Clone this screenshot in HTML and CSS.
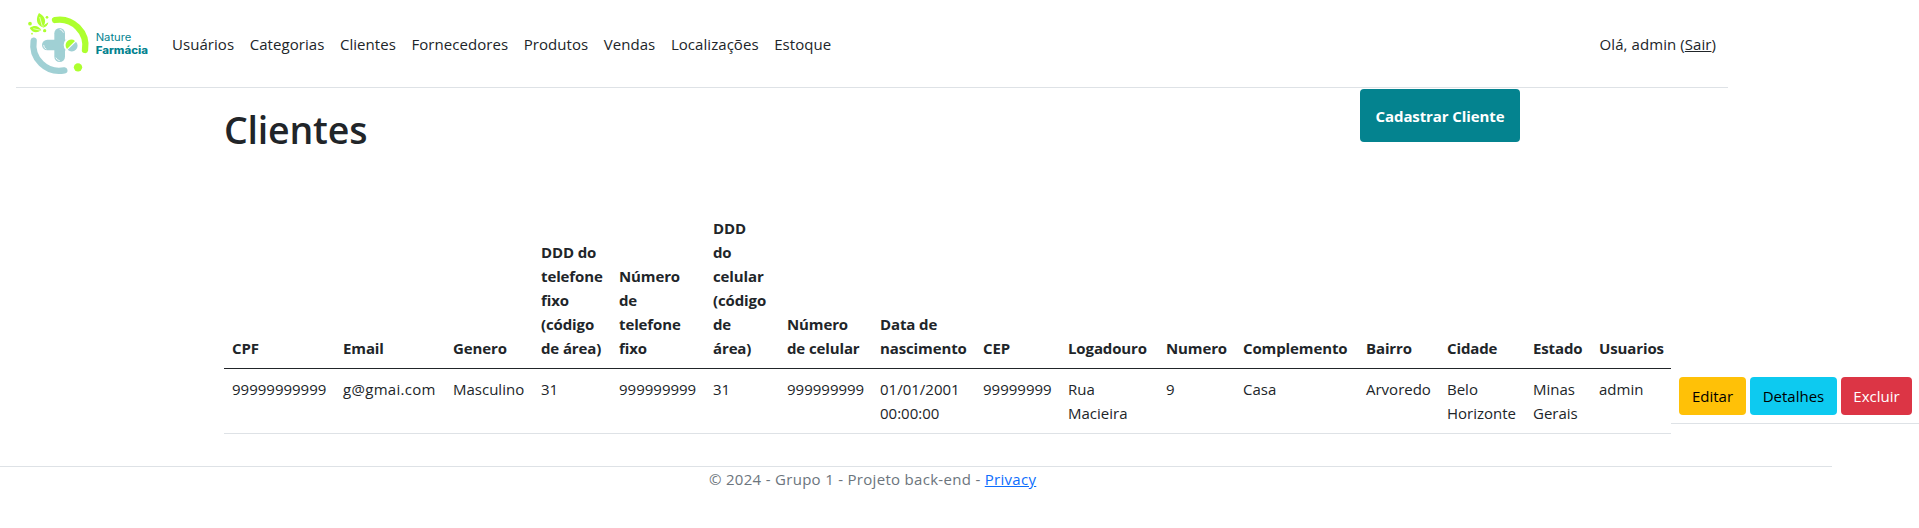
FILE: index.html
```html
<!DOCTYPE html>
<html lang="pt-br">
<head>
<meta charset="utf-8">
<title>Clientes</title>
<link rel="stylesheet" href="styles.css">
</head>
<body>
<header class="navbar">
  <svg class="logo" viewBox="72 24 384 216" role="img" aria-label="Nature Farmácia">
    <g fill="none" stroke-width="19" stroke-linecap="round">
      <path stroke="#adff2f" d="M165 60A78 78 0 0 1 255 150"/>
      <path stroke="#a0d0d4" d="M101 122A78 78 0 0 0 193 211"/>
    </g>
    <g fill="#a0d0d4">
      <rect x="163" y="84" width="32" height="102" rx="16"/>
      <rect x="126" y="119" width="90" height="32" rx="16"/>
      <circle cx="179" cy="135" r="21"/>
    </g>
    <g fill="none" stroke="#fff" stroke-width="2.5" stroke-linecap="round">
      <path d="M180 88Q188 89 190 97M131 136Q131 144 138 147M168 174Q171 181 178 182"/>
    </g>
    <circle cx="213" cy="135" r="22" fill="#fff"/>
    <path fill="#adff2f" d="M201 147A17 17 0 0 1 225 123Z"/>
    <path fill="#a0d0d4" d="M203 149A17 17 0 0 0 228 125Z"/>
    <g fill="#adff2f">
      <circle cx="234" cy="202" r="12.5"/>
      <path d="M117 39C107 55 108 73 127 82C141 67 137 50 117 39Z"/>
      <path d="M89 84C104 73 117 78 124 91C109 101 97 98 89 84Z"/>
      <path d="M128 83Q132 73 145 67Q143 82 128 83Z"/>
      <circle cx="90" cy="71" r="5.5"/>
      <circle cx="141" cy="52" r="4"/>
      <circle cx="134" cy="92" r="5"/>
      <circle cx="96" cy="101" r="2.5"/>
    </g>
    <path fill="none" stroke="#fff" stroke-width="2" d="M119 51L127 79M100 86L122 91"/>
    <text class="logo-thin" x="287" y="122" textLength="107" lengthAdjust="spacingAndGlyphs">Nature</text>
    <text class="logo-bold" x="287" y="162" textLength="157" lengthAdjust="spacingAndGlyphs">Farmácia</text>
  </svg>
  <nav class="links">
    <a>Usuários</a><a>Categorias</a><a>Clientes</a><a>Fornecedores</a><a>Produtos</a><a>Vendas</a><a>Localizações</a><a>Estoque</a>
  </nav>
  <div class="session">Olá, admin (<u>Sair</u>)</div>
</header>
<main class="content">
  <div class="title-row">
    <h1>Clientes</h1>
    <a class="create">Cadastrar Cliente</a>
  </div>
  <div class="row">
    <table>
      <colgroup><col class="c111"><col class="c110"><col class="c88"><col class="c78"><col class="c94"><col class="c74"><col class="c93"><col class="c103"><col class="c85"><col class="c98"><col class="c77"><col class="c123"><col class="c81"><col class="c86"><col class="c66"><col class="c80"></colgroup>
      <thead>
        <tr><th>CPF</th><th>Email</th><th>Genero</th><th>DDD do<br>telefone<br>fixo<br>(código<br>de área)</th><th>Número<br>de<br>telefone<br>fixo</th><th>DDD<br>do<br>celular<br>(código<br>de<br>área)</th><th>Número<br>de celular</th><th>Data de<br>nascimento</th><th>CEP</th><th>Logadouro</th><th>Numero</th><th>Complemento</th><th>Bairro</th><th>Cidade</th><th>Estado</th><th>Usuarios</th></tr>
      </thead>
      <tbody>
        <tr><td>99999999999</td><td class="email">g@gmai.com</td><td>Masculino</td><td>31</td><td>999999999</td><td>31</td><td>999999999</td><td>01/01/2001<br>00:00:00</td><td>99999999</td><td>Rua<br>Macieira</td><td>9</td><td>Casa</td><td>Arvoredo</td><td>Belo<br>Horizonte</td><td>Minas<br>Gerais</td><td>admin</td></tr>
      </tbody>
    </table>
    <div class="actions">
      <a class="btn edit">Editar</a><a class="btn details">Detalhes</a><a class="btn delete">Excluir</a>
    </div>
  </div>
</main>
<footer class="footer">© 2024 - Grupo 1 - Projeto back-end - <a>Privacy</a></footer>
</body>
</html>
```
FILE: styles.css
```css
* { box-sizing: border-box; }
body {
  margin: 0;
  background: #fff;
  color: #212529;
  font: 15px/24px "Open Sans", "Noto Sans", sans-serif;
  overflow: hidden;
}
.navbar {
  display: flex;
  align-items: center;
  width: 1712px;
  height: 88px;
  margin-left: 16px;
  padding: 0 12px 0 8px;
  border-bottom: 1px solid #dee2e6;
}
.logo { width: 128px; height: 72px; flex: none; }
.logo text { fill: #04838f; font-family: Inter, sans-serif; }
.logo-thin { font-size: 30px; }
.logo-bold { font-size: 30px; font-weight: 800; }
.links { display: flex; gap: 15.6px; margin-left: 20px; letter-spacing: 0.05px; }
.session { margin-left: auto; letter-spacing: 0.07px; }
.content { padding-left: 224px; height: 378px; }
.title-row { display: flex; height: 120px; }
h1 {
  width: 1136px;
  margin: 18px 0 0;
  font-size: 37.5px;
  line-height: 48px;
  font-weight: 600;
  letter-spacing: -0.2px;
}
.create {
  width: 160px;
  height: 53px;
  margin-top: 1px;
  border-radius: 4px;
  background: #04838f;
  color: #fff;
  font-weight: 700;
  line-height: 54px;
  text-align: center;
  letter-spacing: -0.1px;
}
.row { display: flex; align-items: flex-start; width: 1696px; }
table { width: 1447px; flex: none; table-layout: fixed; border-collapse: separate; border-spacing: 0; }
th, td { padding: 8px 0 8px 8px; text-align: left; white-space: nowrap; border-bottom: 1px solid #dee2e6; }
th { vertical-align: bottom; font-weight: 700; border-color: #212529; letter-spacing: -0.12px; }
td { vertical-align: top; }
.email { letter-spacing: 0.3px; }
.c111 { width: 111px; }
.c110 { width: 110px; }
.c88 { width: 88px; }
.c78 { width: 78px; }
.c94 { width: 94px; }
.c74 { width: 74px; }
.c93 { width: 93px; }
.c103 { width: 103px; }
.c85 { width: 85px; }
.c98 { width: 98px; }
.c77 { width: 77px; }
.c123 { width: 123px; }
.c81 { width: 81px; }
.c86 { width: 86px; }
.c66 { width: 66px; }
.c80 { width: 80px; }
.actions {
  display: flex;
  gap: 4px;
  width: 249px;
  margin-top: 161px;
  padding: 8px;
  border-bottom: 1px solid #dee2e6;
}
.btn { height: 38px; border-radius: 4px; line-height: 38px; text-align: center; }
.edit { width: 67px; background: #ffc107; color: #000; }
.details { width: 87px; background: #0dcaf0; color: #000; }
.delete { width: 71px; background: #dc3545; color: #fff; }
.footer {
  width: 1832px;
  height: 60px;
  padding: 0 0 0 709px;
  border-top: 1px solid #dee2e6;
  color: #6c757d;
  letter-spacing: 0.3px;
}
.footer a { color: #0d6efd; text-decoration: underline; }
```
